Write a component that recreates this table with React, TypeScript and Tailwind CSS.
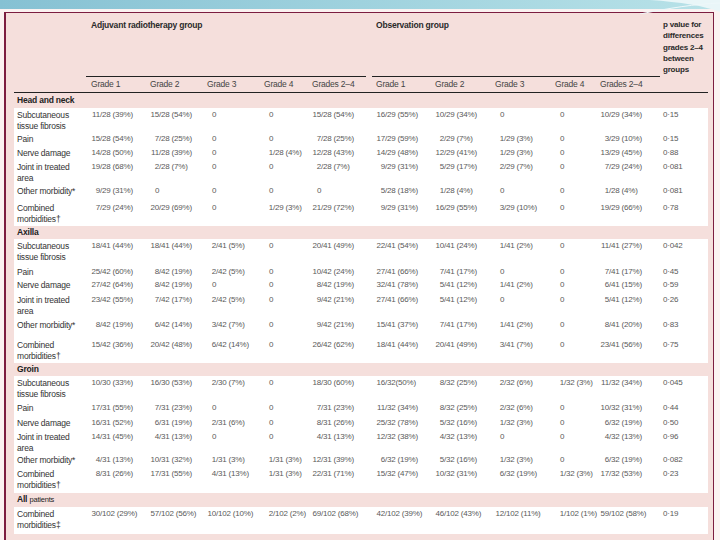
import React from 'react';

// Late-toxicity table: adjuvant radiotherapy vs observation, by region
type Row = { label: React.ReactNode; h: string; values: string[] };
type Section = { title: React.ReactNode; h: string; rows: Row[] };

const cols = 'grid grid-cols-[77px_59px_57px_57px_48px_64px_59px_60px_60px_45px_63px_45px]';

const subc = <>Subcutaneous<br />tissue fibrosis</>;
const joint = <>Joint in treated<br />area</>;
const combined = <>Combined<br />morbidities†</>;

const sections: Section[] = [
    {
        title: 'Head and neck',
        h: 'h-[15px]',
        rows: [
            { label: subc, h: 'h-[24px]', values: ['11/28 (39%)', '15/28 (54%)', '0', '0', '15/28 (54%)', '16/29 (55%)', '10/29 (34%)', '0', '0', '10/29 (34%)', '0·15'] },
            { label: 'Pain', h: 'h-[14px]', values: ['15/28 (54%)', '7/28 (25%)', '0', '0', '7/28 (25%)', '17/29 (59%)', '2/29 (7%)', '1/29 (3%)', '0', '3/29 (10%)', '0·15'] },
            { label: 'Nerve damage', h: 'h-[14px]', values: ['14/28 (50%)', '11/28 (39%)', '0', '1/28 (4%)', '12/28 (43%)', '14/29 (48%)', '12/29 (41%)', '1/29 (3%)', '0', '13/29 (45%)', '0·88'] },
            { label: joint, h: 'h-[24px]', values: ['19/28 (68%)', '2/28 (7%)', '0', '0', '2/28 (7%)', '9/29 (31%)', '5/29 (17%)', '2/29 (7%)', '0', '7/29 (24%)', '0·081'] },
            { label: 'Other morbidity*', h: 'h-[17px]', values: ['9/29 (31%)', '0', '0', '0', '0', '5/28 (18%)', '1/28 (4%)', '0', '0', '1/28 (4%)', '0·081'] },
            { label: combined, h: 'h-[25px]', values: ['7/29 (24%)', '20/29 (69%)', '0', '1/29 (3%)', '21/29 (72%)', '9/29 (31%)', '16/29 (55%)', '3/29 (10%)', '0', '19/29 (66%)', '0·78'] },
        ],
    },
    {
        title: 'Axilla',
        h: 'h-[13px]',
        rows: [
            { label: subc, h: 'h-[26px]', values: ['18/41 (44%)', '18/41 (44%)', '2/41 (5%)', '0', '20/41 (49%)', '22/41 (54%)', '10/41 (24%)', '1/41 (2%)', '0', '11/41 (27%)', '0·042'] },
            { label: 'Pain', h: 'h-[13px]', values: ['25/42 (60%)', '8/42 (19%)', '2/42 (5%)', '0', '10/42 (24%)', '27/41 (66%)', '7/41 (17%)', '0', '0', '7/41 (17%)', '0·45'] },
            { label: 'Nerve damage', h: 'h-[15px]', values: ['27/42 (64%)', '8/42 (19%)', '0', '0', '8/42 (19%)', '32/41 (78%)', '5/41 (12%)', '1/41 (2%)', '0', '6/41 (15%)', '0·59'] },
            { label: joint, h: 'h-[25px]', values: ['23/42 (55%)', '7/42 (17%)', '2/42 (5%)', '0', '9/42 (21%)', '27/41 (66%)', '5/41 (12%)', '0', '0', '5/41 (12%)', '0·26'] },
            { label: 'Other morbidity*', h: 'h-[20px]', values: ['8/42 (19%)', '6/42 (14%)', '3/42 (7%)', '0', '9/42 (21%)', '15/41 (37%)', '7/41 (17%)', '1/41 (2%)', '0', '8/41 (20%)', '0·83'] },
            { label: combined, h: 'h-[25px]', values: ['15/42 (36%)', '20/42 (48%)', '6/42 (14%)', '0', '26/42 (62%)', '18/41 (44%)', '20/41 (49%)', '3/41 (7%)', '0', '23/41 (56%)', '0·75'] },
        ],
    },
    {
        title: 'Groin',
        h: 'h-[13px]',
        rows: [
            { label: subc, h: 'h-[25px]', values: ['10/30 (33%)', '16/30 (53%)', '2/30 (7%)', '0', '18/30 (60%)', '16/32(50%)', '8/32 (25%)', '2/32 (6%)', '1/32 (3%)', '11/32 (34%)', '0·045'] },
            { label: 'Pain', h: 'h-[15px]', values: ['17/31 (55%)', '7/31 (23%)', '0', '0', '7/31 (23%)', '11/32 (34%)', '8/32 (25%)', '2/32 (6%)', '0', '10/32 (31%)', '0·44'] },
            { label: 'Nerve damage', h: 'h-[14px]', values: ['16/31 (52%)', '6/31 (19%)', '2/31 (6%)', '0', '8/31 (26%)', '25/32 (78%)', '5/32 (16%)', '1/32 (3%)', '0', '6/32 (19%)', '0·50'] },
            { label: joint, h: 'h-[23px]', values: ['14/31 (45%)', '4/31 (13%)', '0', '0', '4/31 (13%)', '12/32 (38%)', '4/32 (13%)', '0', '0', '4/32 (13%)', '0·96'] },
            { label: 'Other morbidity*', h: 'h-[14px]', values: ['4/31 (13%)', '10/31 (32%)', '1/31 (3%)', '1/31 (3%)', '12/31 (39%)', '6/32 (19%)', '5/32 (16%)', '1/32 (3%)', '0', '6/32 (19%)', '0·082'] },
            { label: combined, h: 'h-[26px]', values: ['8/31 (26%)', '17/31 (55%)', '4/31 (13%)', '1/31 (3%)', '22/31 (71%)', '15/32 (47%)', '10/32 (31%)', '6/32 (19%)', '1/32 (3%)', '17/32 (53%)', '0·23'] },
        ],
    },
    {
        title: <span>All <span className="text-[7.5px] font-normal">patients</span></span>,
        h: 'h-[14px]',
        rows: [
            { label: <>Combined<br />morbidities‡</>, h: 'h-[27px]', values: ['30/102 (29%)', '57/102 (56%)', '10/102 (10%)', '2/102 (2%)', '69/102 (68%)', '42/102 (39%)', '46/102 (43%)', '12/102 (11%)', '1/102 (1%)', '59/102 (58%)', '0·19'] },
        ],
    },
];

const grades = ['Grade 1', 'Grade 2', 'Grade 3', 'Grade 4', 'Grades 2–4'];

// Numbers line up on the slash, like the printed table
function Value({ v }: { v: string }) {
    const i = v.indexOf('/');
    if (i < 0) return <span className="pl-[5px]">{v}</span>;
    return (
        <span className="whitespace-nowrap">
            <span className="inline-block w-[9px] text-right">{v.slice(0, i)}</span>
            {v.slice(i)}
        </span>
    );
}

export default function App() {
    return (
        <div className="relative w-[720px] h-[540px] overflow-hidden bg-gradient-to-r from-[#86c1d3] via-[#9fd2de] to-[#b8e2e8] font-['Liberation_Sans',Arial,sans-serif] text-[8.5px] leading-[10.5px] tracking-[-0.2px]">
            {/* swoosh at top right */}
            <svg className="absolute top-0 right-0" width="110" height="14" viewBox="0 0 110 14">
                <path d="M40 0 C70 2 95 6 110 12 L110 0 Z" fill="#e9f6f8" />
                <path d="M30 14 C60 8 85 4 110 3" stroke="#eef8fa" strokeWidth="1" fill="none" />
            </svg>

            <div className="mt-[9px] h-[531px] bg-[#fbf2f1] pl-[4px] pr-[6px] pt-[3px]">
                <div className="h-full border-l-2 border-t border-r border-[#7c1d40] bg-[#f5dfdc] pl-[8px] pr-[5px]">
                    {/* Header */}
                    <div className={`${cols} text-[#2a2a2a]`}>
                        <div className="col-start-2 col-span-5 -ml-[5px] mr-[10px] h-[64px] border-b border-[#222] pl-[5px] pt-[7px] font-semibold">
                            Adjuvant radiotherapy group
                        </div>
                        <div className="col-span-5 -ml-[4px] mr-[3px] h-[64px] border-b border-[#222] pl-[4px] pt-[7px] font-semibold">
                            Observation group
                        </div>
                        <div className="row-span-2 pt-[6px] text-[8px] leading-[11.3px] font-semibold">
                            p value for<br />differences<br />grades 2–4<br />between<br />groups
                        </div>
                        <div className="col-start-1 col-span-11 row-start-2 grid grid-cols-subgrid h-[15px] items-center text-[#444]">
                            <div />
                            {[...grades, ...grades].map((g, i) => (
                                <div key={i}>{g}</div>
                            ))}
                        </div>
                    </div>
                    <div className="border-t border-[#222]" />

                    {/* Body */}
                    {sections.map((s, si) => (
                        <div key={si}>
                            <div className={`${s.h} flex items-center pl-[3px] font-bold text-[#222]`}>{s.title}</div>
                            <div className="bg-white">
                                {s.rows.map((r, ri) => (
                                    <div key={ri} className={`${cols} ${r.h} pt-[2px] text-[8px] text-[#5a5a5a]`}>
                                        <div className="pl-[3px] text-[8.5px] text-[#333]">{r.label}</div>
                                        {r.values.map((v, vi) => (
                                            <div key={vi}>{vi === 10 ? v : <Value v={v} />}</div>
                                        ))}
                                    </div>
                                ))}
                            </div>
                        </div>
                    ))}
                </div>
            </div>
        </div>
    );
}
